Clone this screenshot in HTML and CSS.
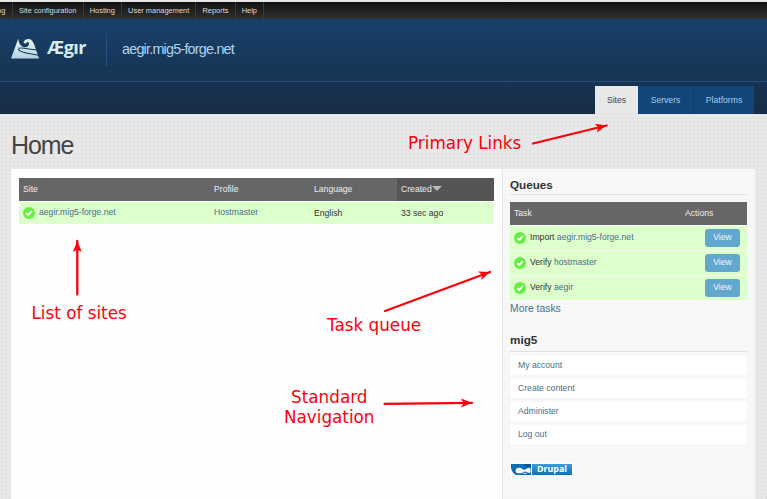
FILE: index.html
```html
<!DOCTYPE html>
<html lang="en">
<head>
<meta charset="utf-8">
<title>Home | aegir.mig5-forge.net</title>
<link rel="stylesheet" href="styles.css">
</head>
<body>
<svg class="defs" width="0" height="0">
  <symbol id="check" viewBox="0 0 12 12"><circle cx="6" cy="6" r="6" fill="#66ee44"/><path d="M3.2 6.2 5.2 8.2 8.9 3.9" fill="none" stroke="#fff" stroke-width="1.9"/></symbol>
</svg>
<nav class="admin"><a>ng</a><a>Site configuration</a><a>Hosting</a><a>User management</a><a>Reports</a><a>Help</a></nav>
<header class="header">
  <div class="brand">
    <svg class="logo" width="28" height="21" viewBox="0 0 28 21">
      <defs><linearGradient id="ice" x2="0" y2="1"><stop stop-color="#e4f5ee"/><stop offset="1" stop-color="#b5d2e5"/></linearGradient></defs>
      <path fill="url(#ice)" d="M0 20.500 7.200 .8C7.600 4.500 8.800 7.200 11.500 8.800 14.500 10 18.300 8.500 18 5.500 17.700 3.500 15.500 3.400 15.400 5.300 14.500 5.800 12.800 5.500 12.500 4.300 13 2 15.500 .9 17.500 .9 22.500 1.200 23 6 28 20.500Z"/>
      <path fill="none" stroke="#17395d" stroke-width="1.1" d="M7.500 10.300C13 9 18 12 26 11.800M7.200 11C9 15.500 20 15.500 27.500 17.300"/>
    </svg>
    <span class="wordmark">Ægır</span>
    <span class="site-name">aegir.mig5-forge.net</span>
  </div>
  <nav class="tabs"><a class="active">Sites</a><a>Servers</a><a>Platforms</a></nav>
</header>
<h1>Home</h1>
<div class="page">
  <main>
    <div class="row head"><span>Site</span><span>Profile</span><span>Language</span><span class="sort">Created<i></i></span></div>
    <div class="row"><span><svg class="check"><use href="#check"/></svg><a>aegir.mig5-forge.net</a></span><span><a>Hostmaster</a></span><span>English</span><span>33 sec ago</span></div>
  </main>
  <aside>
    <h2>Queues</h2>
    <div class="task head"><span>Task</span><span class="actions">Actions</span></div>
    <div class="task"><svg class="check"><use href="#check"/></svg><span>Import <a>aegir.mig5-forge.net</a></span><a class="view">View</a></div>
    <div class="task"><svg class="check"><use href="#check"/></svg><span>Verify <a>hostmaster</a></span><a class="view">View</a></div>
    <div class="task"><svg class="check"><use href="#check"/></svg><span>Verify <a>aegir</a></span><a class="view">View</a></div>
    <a class="more">More tasks</a>
    <h2 class="user">mig5</h2>
    <nav class="menu"><a>My account</a><a>Create content</a><a>Administer</a><a>Log out</a></nav>
    <div class="drupal">
      <svg width="20" height="11" viewBox="0 0 20 11"><path fill="#0870b5" d="M0 0H20V11H5Q1 9 0 4Z"/><path fill="#07558e" d="M13 0H20V5Q16 5 13 0Z"/><path fill="#fff" d="M4.500 7C4.500 3 10 2.500 12.500 6 15 6 16 3.500 18.500 3.500 20 4 20 9 18.500 9 17 9 15.500 7 13.500 7.500 11 9.500 5 10.500 4.500 7Z"/><path fill="none" stroke="#fff" stroke-width=".8" d="M11.500 9Q14 10.300 16 8.800"/></svg>
      <span>Drupal</span>
    </div>
  </aside>
</div>
<div class="note primary">Primary Links</div>
<div class="note sites">List of sites</div>
<div class="note queue">Task queue</div>
<div class="note standard">Standard<br>Navigation</div>
<svg class="arrows" width="767" height="499" viewBox="0 0 767 499">
  <defs><marker id="tip" markerUnits="userSpaceOnUse" markerWidth="12" markerHeight="10" refX="11" refY="4.500" orient="auto"><path d="M0 0 11 4.500 0 9 2.500 4.500Z" fill="#ff000c"/></marker></defs>
  <g fill="none" stroke="#ff000c" stroke-width="2.300" stroke-linecap="round">
    <path d="M533 143.500 606.500 125.500" marker-end="url(#tip)"/>
    <path d="M77.300 294.500V241" marker-end="url(#tip)"/>
    <path d="M385 311 490 272" marker-end="url(#tip)"/>
    <path d="M384.500 403.800 472 402.800" marker-end="url(#tip)"/>
  </g>
</svg>
</body>
</html>
```
FILE: styles.css
```css
* { box-sizing: border-box; }
body {
  margin: 0; padding-top: 2px; height: 499px; overflow: hidden; position: relative;
  font: 8.65px/12px "Liberation Sans", Arial, sans-serif; color: #333;
  background: radial-gradient(circle at 2px 2px, #dedede .5px, transparent 1px) 0 0 / 4px 4px, #e8e8e8;
}
.defs { position: absolute; }
a { color: #48708b; }
.admin { height: 17px; display: flex; background: linear-gradient(#111, #303030); font-size: 7.45px; line-height: 17px; overflow: hidden; }
.admin a { color: #ddd; padding: 0 6.2px 0 6px; border-right: 1px solid #393939; white-space: nowrap; }
.admin a:first-child { width: 13px; padding: 0; text-indent: -3px; }
.header { height: 95px; background: linear-gradient(#18406a, #172d45); }
.brand { height: 63px; padding: 15px 0 0 11px; display: flex; border-bottom: 1px solid #214f80; }
.logo { margin-top: 4px; }
.wordmark { width: 59px; margin-left: 8px; font: bold 18px/27px "Open Sans", sans-serif; letter-spacing: -.5px; color: #d6ebec; }
.site-name { height: 32px; padding-left: 15px; border-left: 1px solid #205489; font-size: 14.4px; line-height: 30px; letter-spacing: -.8px; color: #b0d3f2; }
.tabs { height: 32px; display: flex; justify-content: flex-end; padding: 4px 13px 0 0; }
.tabs a { width: 60px; height: 28px; text-align: center; line-height: 28px; background: #12457a; color: #a5cbed; }
.tabs a:nth-child(2) { width: 56px; border-right: 1px solid #153c63; }
.tabs .active { width: 43px; background: #e8e8e8; color: #444; }
h1 { margin: 0 0 0 11px; height: 55px; font-size: 25px; line-height: 62px; font-weight: normal; letter-spacing: -1.1px; color: #444; }
.page { margin: 0 12px 0 11px; height: 330px; display: flex; background: radial-gradient(circle at 2px 2px, #fafafa .5px, transparent 1px) 0 0 / 4px 4px, #fff; }
main { width: 491px; padding: 9px 8px; }
.row { display: grid; grid-template-columns: 191px 100px 87px 97px; height: 22px; line-height: 21px; background: #dfc; }
.row > span { padding-left: 4px; display: flex; align-items: center; }
.row > span a { margin-top: -1px; }
.row.head { height: 23px; margin-bottom: 1px; }
.row.head, .task.head { background: #666; color: #eee; }
.head .sort { background: #555; }
.sort i { border: 5px solid transparent; border-top-color: #bbb; border-bottom: 0; margin-top: -3px; }
.check { width: 12px; height: 12px; margin-right: 4px; flex: none; }
aside { width: 253px; padding: 8px 8px 0 7px; border-left: 1px solid #e6e6e6; background: radial-gradient(circle at 2px 2px, #f2f2f2 .5px, transparent 1px) 0 0 / 4px 4px, #f8f8f8; }
h2 { margin: 0 0 7px; height: 18px; border-bottom: 1px solid #e2e2e2; font-size: 11.7px; line-height: 16px; color: #333; }
.task { height: 24px; margin-bottom: 1px; padding: 0 7px 0 4px; display: flex; align-items: center; background: #dfc; line-height: 14px; }
.task > span { margin-top: -2px; }
.task.head { height: 23px; line-height: 20px; justify-content: space-between; }
.actions { width: 62px; margin-right: -7px; }
.view { width: 35px; height: 18px; margin-left: auto; border-radius: 3px; background: #62a7cd; color: #eef8ff; text-align: center; line-height: 16px; }
.more { display: block; font-size: 10.4px; line-height: 15px; }
h2.user { margin: 16px 0 4px; height: 20px; line-height: 16px; }
.menu a { display: block; height: 19px; margin-bottom: 4px; padding-left: 8px; border-radius: 2px; background: #fff; line-height: 18px; }
.drupal { width: 63px; margin-top: 19px; height: 13px; padding: 1px; display: flex; background: #fff; }
.drupal span { flex: 1; margin-left: 1px; background: linear-gradient(#3c9cda, #0874b9); color: #fff; text-align: center; font: bold 8.8px/10px "Open Sans", sans-serif; }
.note { position: absolute; font: 16.8px/20px "DejaVu Sans", sans-serif; color: #ff000c; white-space: nowrap; text-align: center; }
.primary { left: 408px; top: 133px; }
.sites { left: 31.5px; top: 303px; }
.queue { left: 327px; top: 315px; }
.standard { left: 284px; top: 387px; }
.task .actions { width: 55px; margin-right: 0; }
.arrows { position: absolute; left: 0; top: 0; }
```
